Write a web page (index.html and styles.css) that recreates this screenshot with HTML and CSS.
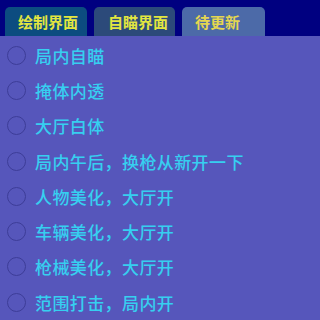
FILE: index.html
```html
<!DOCTYPE html>
<html lang="zh">
<head>
<meta charset="utf-8">
<link rel="stylesheet" href="styles.css">
</head>
<body>
<div class="app">
  <div class="tabs">
    <div class="tab tab-draw">绘制界面</div>
    <div class="tab tab-aim">自瞄界面</div>
    <div class="tab tab-todo">待更新</div>
  </div>
  <div class="panel">
    <div class="row"><span class="radio"></span><span class="label">局内自瞄</span></div>
    <div class="row"><span class="radio"></span><span class="label">掩体内透</span></div>
    <div class="row"><span class="radio"></span><span class="label">大厅白体</span></div>
    <div class="row"><span class="radio"></span><span class="label">局内午后，换枪从新开一下</span></div>
    <div class="row"><span class="radio"></span><span class="label">人物美化，大厅开</span></div>
    <div class="row"><span class="radio"></span><span class="label">车辆美化，大厅开</span></div>
    <div class="row"><span class="radio"></span><span class="label">枪械美化，大厅开</span></div>
    <div class="row"><span class="radio"></span><span class="label">范围打击，局内开</span></div>
  </div>
</div>
</body>
</html>
```
FILE: styles.css
```css
html, body {
  margin: 0;
  padding: 0;
  height: 100%;
  overflow: hidden;
  background: #000080;
  font-family: "Noto Sans CJK SC", "Noto Sans", sans-serif;
}
.app {
  display: flex;
  flex-direction: column;
  height: 100%;
  min-height: 320px;
}
.tabs {
  display: flex;
  gap: 7px;
  padding: 7px 0 0 5px;
  height: 29px;
}
.tab {
  width: 82px;
  box-sizing: border-box;
  padding-left: 13px;
  border-radius: 5px 5px 0 0;
  font-size: 15px;
  line-height: 29px;
  font-weight: 700;
  color: #e2e640;
}
.tab-draw { background: #0c4c80; }
.tab-aim { background: #2c4a7a; width: 81px; padding-left: 14px; }
.tab-todo { background: #4c6aa8; width: 83px; color: #e4d650; }
.panel {
  flex: 1;
  background: #5656bb;
  padding-top: 1.5px;
  display: flex;
  flex-direction: column;
}
.row {
  height: 35.3px;
  display: flex;
  align-items: center;
  padding-left: 7px;
}
.radio {
  width: 17px;
  height: 17px;
  border: 1.5px solid #3d3d98;
  border-radius: 50%;
  flex: none;
}
.label {
  margin-left: 9px;
  font-size: 17px;
  letter-spacing: 0.4px;
  font-weight: 500;
  color: #36cff0;
}
```
